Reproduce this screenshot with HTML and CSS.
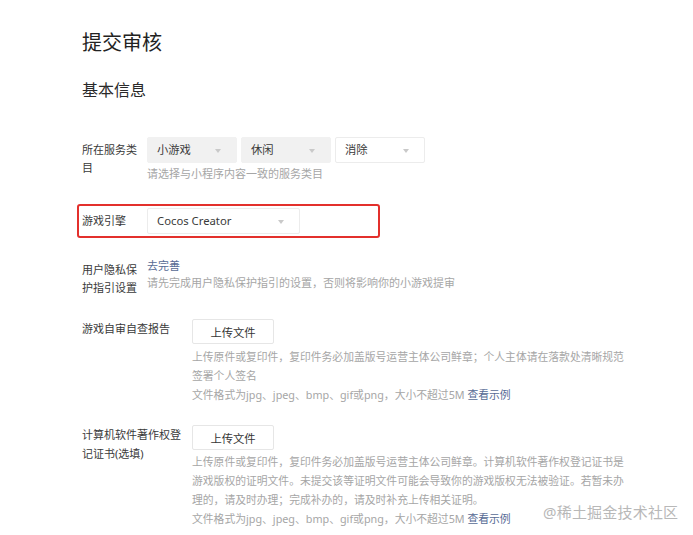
FILE: index.html
```html
<!DOCTYPE html>
<html lang="zh-CN">
<head>
  <meta charset="UTF-8">
  <title>提交审核</title>
  <link rel="stylesheet" href="styles.css">
</head>
<body>
  <div class="page">
    <h1>提交审核</h1>
    <h2>基本信息</h2>

    <div class="form-row row-category">
      <div class="label label-short">所在服务类目</div>
      <div class="content">
        <div class="select-group">
          <div class="select select-filled">小游戏<span class="arrow"></span></div>
          <div class="select select-filled">休闲<span class="arrow"></span></div>
          <div class="select">消除<span class="arrow"></span></div>
        </div>
        <div class="hint hint-tight">请选择与小程序内容一致的服务类目</div>
      </div>
    </div>

    <div class="form-row row-engine highlight">
      <div class="label label-short">游戏引擎</div>
      <div class="content">
        <div class="select select-wide">Cocos Creator<span class="arrow"></span></div>
      </div>
    </div>

    <div class="form-row row-privacy">
      <div class="label label-short">用户隐私保护指引设置</div>
      <div class="content">
        <a class="link" href="#">去完善</a>
        <div class="hint hint-tight">请先完成用户隐私保护指引的设置，否则将影响你的小游戏提审</div>
      </div>
    </div>

    <div class="form-row row-upload">
      <div class="label label-long">游戏自审自查报告</div>
      <div class="content content-upload">
        <button class="upload-btn">上传文件</button>
        <div class="hint-block">
          <div class="hint">上传原件或复印件，复印件务必加盖版号运营主体公司鲜章；个人主体请在落款处清晰规范签署个人签名</div>
          <div class="hint">文件格式为jpg、jpeg、bmp、gif或png，大小不超过5M <a class="link" href="#">查看示例</a></div>
        </div>
      </div>
    </div>

    <div class="form-row row-upload row-copyright">
      <div class="label label-long">计算机软件著作权登记证书(选填)</div>
      <div class="content content-upload">
        <button class="upload-btn">上传文件</button>
        <div class="hint-block">
          <div class="hint">上传原件或复印件，复印件务必加盖版号运营主体公司鲜章。计算机软件著作权登记证书是游戏版权的证明文件。未提交该等证明文件可能会导致你的游戏版权无法被验证。若暂未办理的，请及时办理；完成补办的，请及时补充上传相关证明。</div>
          <div class="hint">文件格式为jpg、jpeg、bmp、gif或png，大小不超过5M <a class="link" href="#">查看示例</a></div>
        </div>
      </div>
    </div>
  </div>

  <div class="watermark">@稀土掘金技术社区</div>
</body>
</html>
```

FILE: styles.css
```css
body {
  margin: 0;
  background-color: #fff;
  font-family: "Noto Sans", "Noto Sans CJK SC", sans-serif;
  color: #353535;
  width: 693px;
  height: 535px;
  overflow: hidden;
  position: relative;
}

.page {
  padding: 29px 0 0 82px;
}

h1 {
  margin: 0;
  font-size: 20px;
  line-height: 28px;
  font-weight: normal;
  color: #222;
}

h2 {
  margin: 22px 0 0;
  font-size: 16px;
  line-height: 22px;
  font-weight: normal;
  color: #2a2a2a;
}

.form-row {
  display: flex;
  align-items: flex-start;
  font-size: 11px;
}

.label {
  flex: none;
  color: #3a3a3a;
}

.label-short {
  width: 58px;
  margin-right: 7px;
  padding-top: 4px;
  line-height: 18px;
}

.label-long {
  width: 100px;
  margin-right: 10px;
  line-height: 19px;
}

.row-category {
  margin-top: 36px;
}

.select-group {
  display: flex;
  gap: 4px;
}

.select {
  position: relative;
  box-sizing: border-box;
  width: 90px;
  height: 26px;
  line-height: 24px;
  padding-left: 9px;
  border: 1px solid #ececec;
  border-radius: 2px;
  background-color: #fff;
  color: #3a3a3a;
  font-size: 11.3px;
}

.select-filled {
  background-color: #f1f1f1;
  border-color: #f1f1f1;
}

.select-wide {
  width: 153px;
}

.arrow {
  position: absolute;
  right: 15px;
  top: 11px;
  width: 0;
  height: 0;
  border-left: 3.5px solid transparent;
  border-right: 3.5px solid transparent;
  border-top: 4px solid #c9c9c9;
}

.hint {
  color: #a6a6a6;
  line-height: 19px;
}

.hint-tight {
  line-height: 17px;
}

.row-category .hint {
  margin-top: 2px;
  line-height: 18px;
}

.highlight {
  box-sizing: border-box;
  width: 303px;
  margin: 21px 0 0 -5px;
  padding: 2px 3px;
  border: 2px solid #e3302c;
  border-radius: 3px;
}

.row-engine .label {
  padding-top: 4px;
}

.row-privacy {
  margin-top: 19px;
}

.row-privacy .content {
  line-height: 17px;
}

.link {
  color: #576b95;
  text-decoration: none;
}

.row-upload {
  margin-top: 22px;
}

.row-copyright {
  margin-top: 21px;
}

.content-upload {
  width: 442px;
}

.content-upload .hint {
  font-size: 10.8px;
}

.upload-btn {
  box-sizing: border-box;
  width: 82px;
  height: 25px;
  padding: 0;
  border: 1px solid #e6e6e6;
  border-radius: 2px;
  background-color: #fff;
  color: #353535;
  font-family: inherit;
  font-size: 11.3px;
}

.hint-block {
  margin-top: 3px;
}

.row-copyright .hint-block {
  margin-top: 2px;
}

.watermark {
  position: absolute;
  left: 543px;
  top: 501px;
  font-size: 15px;
  line-height: 22px;
  color: #b8b8b8;
  letter-spacing: 0.2px;
}
```
